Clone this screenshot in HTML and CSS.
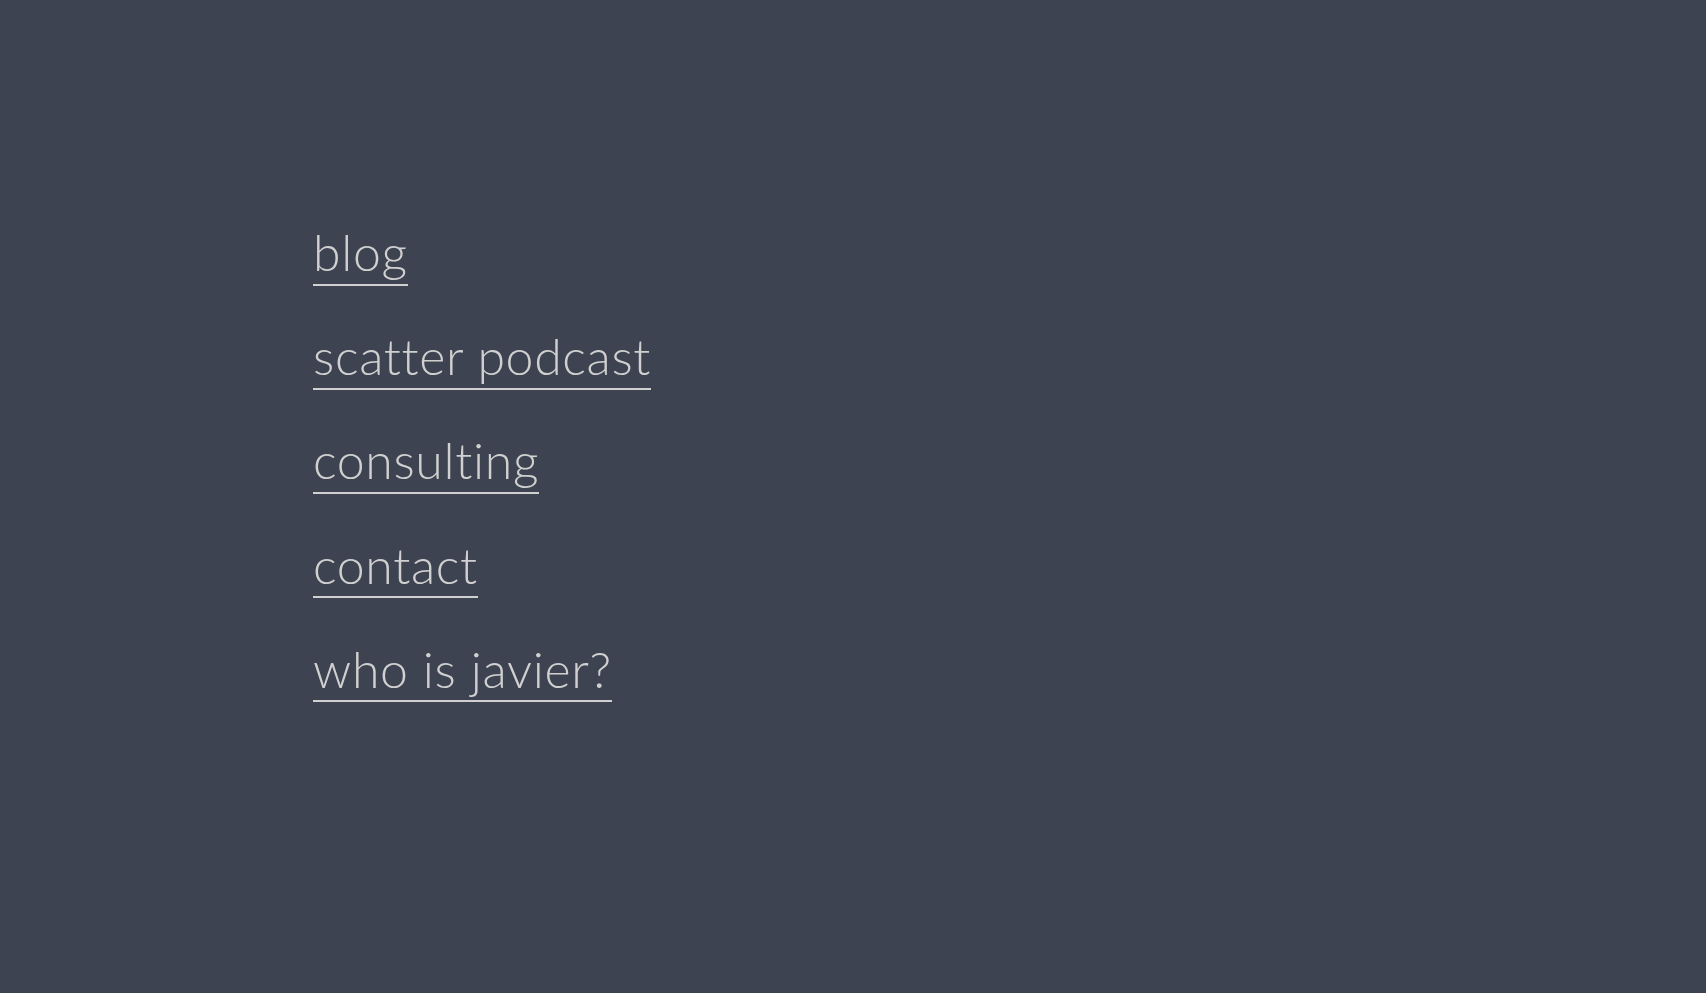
FILE: index.html
```html
<!DOCTYPE html>
<html lang="en">
<head>
<meta charset="utf-8">
<title>javier</title>
<link rel="stylesheet" href="styles.css">
</head>
<body>
<main class="page">
  <nav class="menu">
    <a class="menu-link" href="#">blog</a>
    <a class="menu-link" href="#">scatter podcast</a>
    <a class="menu-link" href="#">consulting</a>
    <a class="menu-link" href="#">contact</a>
    <a class="menu-link" href="#">who is javier?</a>
  </nav>
</main>
</body>
</html>
```
FILE: styles.css
```css
html, body {
  margin: 0;
  padding: 0;
  height: 100%;
}
body {
  background: #3d4350;
  font-family: "Lato", "Open Sans", sans-serif;
}
.page {
  padding: 222px 0 0 313px;
}
.menu {
  display: flex;
  flex-direction: column;
  align-items: flex-start;
  gap: 40.7px;
}
.menu-link {
  display: inline-block;
  color: #d0d0d0;
  text-decoration: none;
  font-size: 50px;
  font-weight: 300;
  line-height: 60px;
  letter-spacing: 0.65px;
  font-variant-ligatures: none;
  padding-bottom: 1.5px;
  border-bottom: 2px solid #d0d0d0;
}
```
